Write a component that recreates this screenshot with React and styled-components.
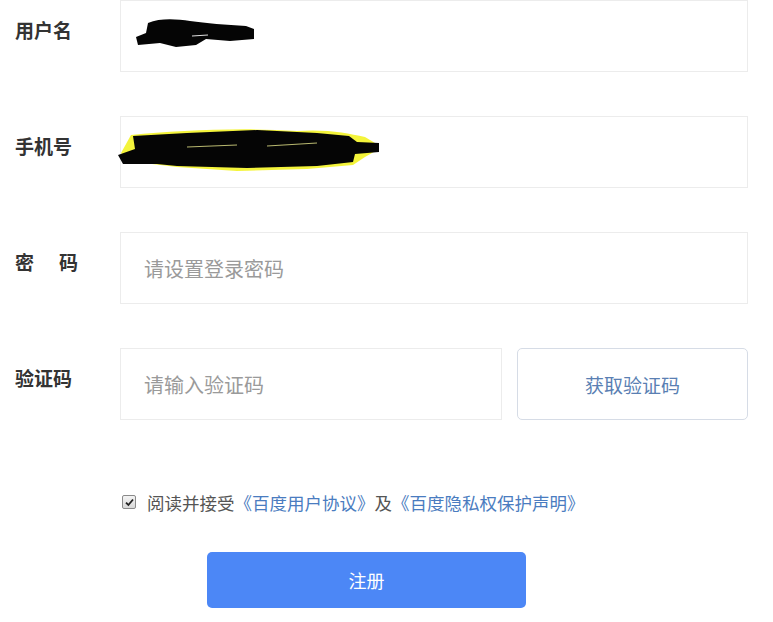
import styled, { createGlobalStyle } from 'styled-components';

const GlobalStyle = createGlobalStyle`
    html, body {
        margin: 0;
        padding: 0;
        background: #ffffff;
    }
    body {
        font-family: "Liberation Sans", "Noto Sans CJK SC", sans-serif;
    }
`;

// 가려진 값 (마커로 지운 부분)
const Redact = ({ wide }) =>
    wide ? (
        <svg width="264" height="48" viewBox="0 0 264 48">
            <path
                d="M14 10 C60 6 120 2 180 6 C210 4 230 8 248 12 L258 18 L262 24 L248 32 L236 40 L190 44 L120 46 L60 42 L10 36 L4 28 Z"
                fill="#f1f10a"
                opacity="0.8"
            />
            <path
                d="M16 11 L70 8 L140 5 L200 8 L232 11 L240 17 L262 18 L262 27 L238 29 L236 37 L200 41 L130 43 L60 41 L40 39 L6 39 L1 30 L18 24 Z"
                fill="#050505"
            />
            <path d="M70 22 L120 20 M150 21 L200 18" stroke="#b8b870" strokeWidth="1.2" />
        </svg>
    ) : (
        <svg width="124" height="32" viewBox="0 0 124 32">
            <path
                d="M12 6 C24 1 40 2 54 4 C70 6 90 8 110 9 L118 12 L118 22 L94 24 L70 22 L60 28 L40 30 L24 26 L2 28 L0 20 L10 16 Z"
                fill="#050505"
            />
            <path d="M56 19 L72 18" stroke="#dddddd" strokeWidth="1.2" />
        </svg>
    );

const SignupForm = () => {
    return (
        <>
            <GlobalStyle />
            <Page>
                <Grid>
                    <Label>用户名</Label>
                    <Field>
                        <Mask $offset={15}>
                            <Redact />
                        </Mask>
                    </Field>

                    <Label>手机号</Label>
                    <Field>
                        <Mask $offset={-4}>
                            <Redact wide />
                        </Mask>
                    </Field>

                    <Label $spaced>密码</Label>
                    <Input type="password" placeholder="请设置登录密码" />

                    <Label>验证码</Label>
                    <CodeRow>
                        <Input placeholder="请输入验证码" />
                        <CodeButton>获取验证码</CodeButton>
                    </CodeRow>
                </Grid>

                <Agree>
                    <Check>
                        <svg width="9" height="9" viewBox="0 0 9 9">
                            <path d="M1 4.6 L3.4 7 L8 1.5" stroke="#222" strokeWidth="1.8" fill="none" />
                        </svg>
                    </Check>
                    <span>阅读并接受</span>
                    <Link>《百度用户协议》</Link>
                    <span>及</span>
                    <Link>《百度隐私权保护声明》</Link>
                </Agree>

                <Submit>注册</Submit>
            </Page>
        </>
    );
};
export default SignupForm;

const Page = styled.div`
    width: 773px;
    height: 622px;
    overflow: hidden;
    display: flex;
    flex-direction: column;
`;

const Grid = styled.div`
    display: grid;
    grid-template-columns: 105px 628px;
    grid-auto-rows: 72px;
    row-gap: 44px;
    padding-left: 15px;
`;

const Label = styled.div`
    padding-top: 16px;
    line-height: 28px;
    font-size: 19px;
    font-weight: bold;
    color: #333333;
    letter-spacing: ${p => (p.$spaced ? '25px' : '0')};
    font-family: "Noto Sans CJK SC", serif;
`;

const Field = styled.div`
    box-sizing: border-box;
    height: 72px;
    border: 1px solid #ececec;
    display: flex;
    align-items: center;
`;

const Mask = styled.div`
    display: flex;
    margin-left: ${p => p.$offset}px;
    margin-top: -6px;
`;

const Input = styled.input`
    box-sizing: border-box;
    width: 100%;
    height: 72px;
    border: 1px solid #ececec;
    outline: none;
    padding: 0 0 0 23px;
    font-size: 20px;
    font-family: "Noto Sans CJK SC", sans-serif;
    color: #333;
    background: #fff;
    &::placeholder {
        color: #9a9a9a;
    }
`;

const CodeRow = styled.div`
    display: grid;
    grid-template-columns: 382px 231px;
    column-gap: 15px;
`;

const CodeButton = styled.button`
    box-sizing: border-box;
    height: 72px;
    border: 1px solid #d6dce6;
    border-radius: 5px;
    background: #fff;
    color: #5a7fb3;
    font-size: 19px;
    font-family: "Noto Sans CJK SC", sans-serif;
    cursor: pointer;
`;

const Agree = styled.div`
    display: flex;
    align-items: center;
    margin-top: 70px;
    padding-left: 122px;
    height: 24px;
    font-size: 17.5px;
    color: #555555;
    font-family: "Noto Sans CJK SC", sans-serif;
    white-space: nowrap;
`;

const Check = styled.span`
    box-sizing: border-box;
    width: 14px;
    height: 14px;
    margin-right: 11px;
    border: 1px solid #8a8a8a;
    border-radius: 2px;
    background: linear-gradient(#f4f4f4, #d8d8d8);
    display: flex;
    align-items: center;
    justify-content: center;
`;

const Link = styled.span`
    color: #4a7cc0;
`;

const Submit = styled.button`
    align-self: flex-start;
    margin-top: 38px;
    margin-left: 207px;
    width: 319px;
    height: 56px;
    border: none;
    border-radius: 5px;
    background: #4c87f6;
    color: #ffffff;
    font-size: 18px;
    font-family: "Noto Sans CJK SC", sans-serif;
    cursor: pointer;
`;
